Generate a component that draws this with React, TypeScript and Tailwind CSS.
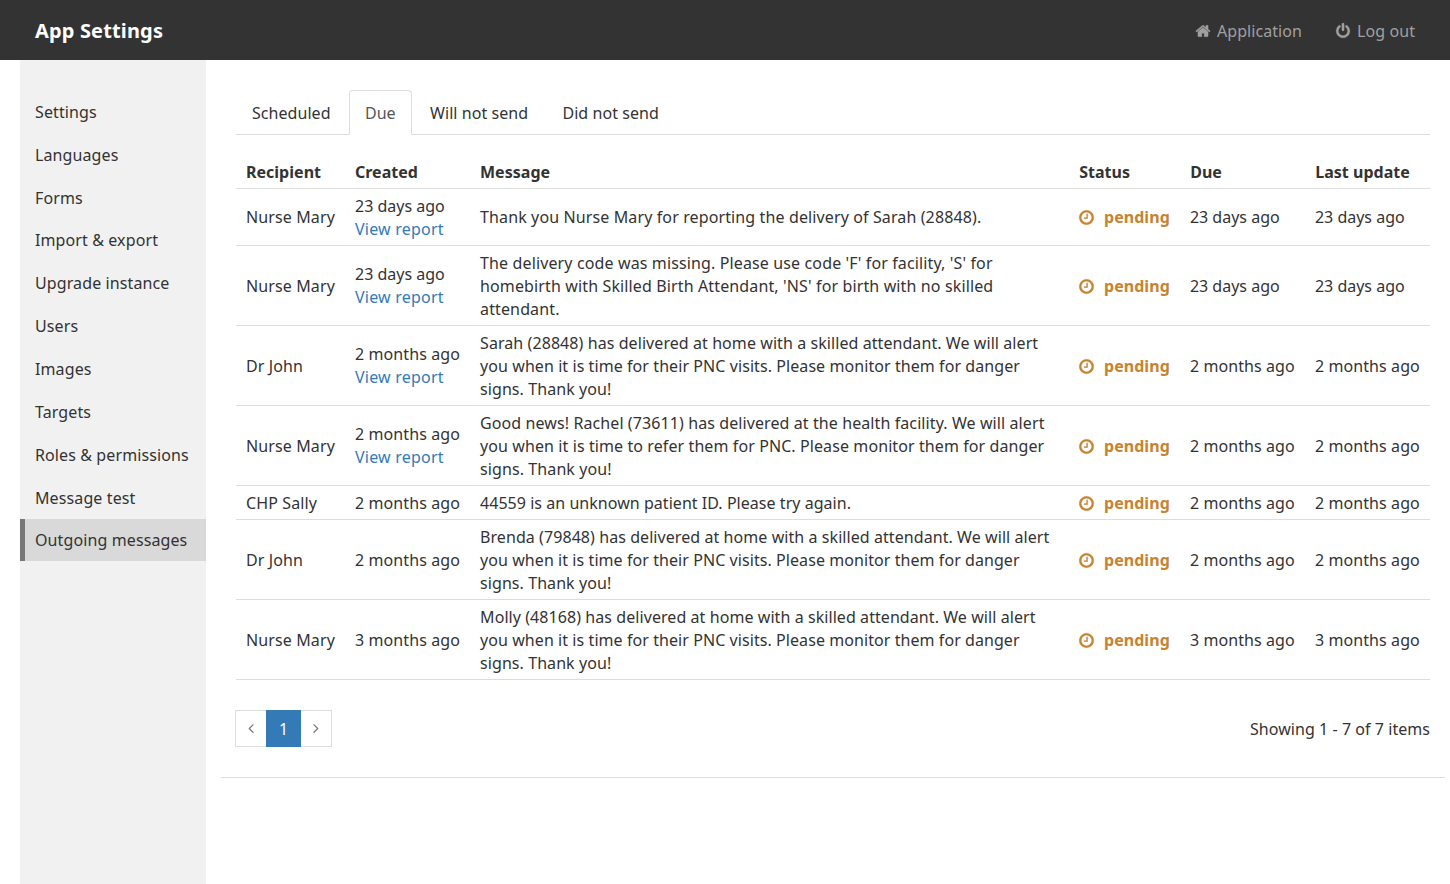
import React from 'react';

const HOME =
  'M1472 992v480q0 26-19 45t-45 19h-384v-384h-256v384h-384q-26 0-45-19t-19-45v-480q0-1 .5-3t.5-3l575-474 575 474q1 2 1 6zm223-69l-62 74q-8 9-21 11h-3q-13 0-21-7l-692-577-692 577q-12 8-24 7-13-2-21-11l-62-74q-8-10-7-23.5t11-21.5l719-599q32-26 76-26t76 26l244 204v-195q0-14 9-23t23-9h192q14 0 23 9t9 23v408l219 182q10 8 11 21.5t-7 23.5z';
const POWER =
  'M1664 896q0 156-61 298t-164 245-245 164-298 61-298-61-245-164-164-245-61-298q0-182 80.5-343t226.5-270q43-32 95.5-25t83.5 50q32 42 24.5 94.5t-49.5 84.5q-98 74-151.5 181t-53.5 228q0 104 40.5 198.5t109.5 163.5 163.5 109.5 198.5 40.5 198.5-40.5 163.5-109.5 109.5-163.5 40.5-198.5q0-121-53.5-228t-151.5-181q-42-32-49.5-84.5t24.5-94.5q31-43 84-50t95 25q146 109 226.5 270t80.5 343zm-640-768v640q0 52-38 90t-90 38-90-38-38-90v-640q0-52 38-90t90-38 90 38 38 90z';
const CLOCK =
  'M1024 544v448q0 14-9 23t-23 9h-320q-14 0-23-9t-9-23v-64q0-14 9-23t23-9h224v-352q0-14 9-23t23-9h64q14 0 23 9t9 23zm416 352q0-148-73-273t-198-198-273-73-273 73-198 198-73 273 73 273 198 198 273 73 273-73 198-198 73-273zm224 0q0 209-103 385.5t-279.5 279.5-385.5 103-385.5-103-279.5-279.5-103-385.5 103-385.5 279.5-279.5 385.5-103 385.5 103 279.5 279.5 103 385.5z';
const ANGLE_LEFT =
  'M1203 544q0 13-10 23l-393 393 393 393q10 10 10 23t-10 23l-50 50q-10 10-23 10t-23-10l-466-466q-10-10-10-23t10-23l466-466q10-10 23-10t23 10l50 50q10 10 10 23z';
const ANGLE_RIGHT =
  'M1171 960q0 13-10 23l-466 466q-10 10-23 10t-23-10l-50-50q-10-10-10-23t10-23l393-393-393-393q-10-10-10-23t10-23l50-50q10-10 23-10t23 10l466 466q10 10 10 23z';

function Icon({ d, className = 'size-4', stroke = 0 }: { d: string; className?: string; stroke?: number }) {
  return (
    <svg
      viewBox="0 0 1792 1792"
      fill="currentColor"
      stroke="currentColor"
      strokeWidth={stroke}
      className={`shrink-0 overflow-visible ${className}`}
      aria-hidden="true"
    >
      <path d={d} />
    </svg>
  );
}

const MENU = [
  'Settings',
  'Languages',
  'Forms',
  'Import & export',
  'Upgrade instance',
  'Users',
  'Images',
  'Targets',
  'Roles & permissions',
  'Message test',
  'Outgoing messages',
];

const TABS = ['Scheduled', 'Due', 'Will not send', 'Did not send'];

type Row = { to: string; when: string; report?: boolean; text: string; tracking: string };

const ROWS: Row[] = [
  {
    to: 'Nurse Mary',
    when: '23 days ago',
    report: true,
    text: 'Thank you Nurse Mary for reporting the delivery of Sarah (28848).',
    tracking: 'tracking-[0.12px]',
  },
  {
    to: 'Nurse Mary',
    when: '23 days ago',
    report: true,
    text: "The delivery code was missing. Please use code 'F' for facility, 'S' for homebirth with Skilled Birth Attendant, 'NS' for birth with no skilled attendant.",
    tracking: 'tracking-[0.13px]',
  },
  {
    to: 'Dr John',
    when: '2 months ago',
    report: true,
    text: 'Sarah (28848) has delivered at home with a skilled attendant. We will alert you when it is time for their PNC visits. Please monitor them for danger signs. Thank you!',
    tracking: 'tracking-[0.075px]',
  },
  {
    to: 'Nurse Mary',
    when: '2 months ago',
    report: true,
    text: 'Good news! Rachel (73611) has delivered at the health facility. We will alert you when it is time to refer them for PNC. Please monitor them for danger signs. Thank you!',
    tracking: 'tracking-[0.095px]',
  },
  {
    to: 'CHP Sally',
    when: '2 months ago',
    text: '44559 is an unknown patient ID. Please try again.',
    tracking: 'tracking-[0.04px]',
  },
  {
    to: 'Dr John',
    when: '2 months ago',
    text: 'Brenda (79848) has delivered at home with a skilled attendant. We will alert you when it is time for their PNC visits. Please monitor them for danger signs. Thank you!',
    tracking: 'tracking-[0.07px]',
  },
  {
    to: 'Nurse Mary',
    when: '3 months ago',
    text: 'Molly (48168) has delivered at home with a skilled attendant. We will alert you when it is time for their PNC visits. Please monitor them for danger signs. Thank you!',
    tracking: 'tracking-[0.07px]',
  },
];

const COLUMNS = [
  { label: 'Recipient', width: 'w-[109px]' },
  { label: 'Created', width: 'w-[125px]' },
  { label: 'Message', width: 'w-[599px]' },
  { label: 'Status', width: 'w-[111px]' },
  { label: 'Due', width: 'w-[125px]' },
  { label: 'Last update', width: 'w-[125px]' },
];

function When({ value }: { value: string }) {
  return <div className={value.includes('months') ? 'tracking-[0.09px]' : 'tracking-normal'}>{value}</div>;
}

export default function App() {
  return (
    <div className="flex h-[884px] w-[1450px] flex-col overflow-hidden bg-white font-['Noto_Sans',sans-serif] text-[16px] leading-[22.857px] text-[#333333]">
      <header className="flex h-[60px] shrink-0 items-center justify-between bg-[#333333] px-[35px]">
        <h1 className="pt-[2px] text-[20px] font-bold tracking-[0.15px] text-white">App Settings</h1>
        <nav className="flex gap-[33px] pt-[2px] text-[#a0a0a0]">
          <a className="flex items-center gap-[5.8px] tracking-[0.05px]">
            <Icon d={HOME} stroke={30} />
            Application
          </a>
          <a className="flex items-center gap-[6.2px] tracking-[0.07px]">
            <Icon d={POWER} className="size-4" stroke={30} />
            Log out
          </a>
        </nav>
      </header>
      <div className="flex min-h-0 flex-1 pl-5">
        <ul className="w-[185.6px] shrink-0 bg-[#f1f1f1] pt-[30px] tracking-[0.11px]">
          {MENU.map((item) => (
            <li
              key={item}
              className={
                item === 'Outgoing messages'
                  ? 'border-l-[5px] border-[#777777] bg-[#d9d9d9] pt-[10.892px] pb-[9.11px] pl-[10px]'
                  : 'pt-[10.892px] pb-[9.11px] pl-[15px]'
              }
            >
              {item}
            </li>
          ))}
        </ul>
        <main className="min-w-0 flex-1 pr-[5px] pl-[15px]">
          <section className="border-b border-[#dddddd] px-[15px] pt-[30px] pb-[30px]">
            <ul className="flex border-b border-[#dddddd] tracking-[0.05px]">
              {TABS.map((tab) => (
                <li
                  key={tab}
                  className={
                    tab === 'Due'
                      ? 'mr-[2px] -mb-px rounded-t-[4px] border border-[#dddddd] border-b-white bg-white pt-[11px] pr-[15px] pb-[9px] pl-[15.4px] text-[#555555]'
                      : 'mr-[2px] -mb-px border border-transparent pt-[11px] pr-[15px] pb-[9px] pl-[15.4px]'
                  }
                >
                  {tab}
                </li>
              ))}
            </ul>
            <table className="mt-[20px] w-full table-fixed border-collapse">
              <thead>
                <tr className="border-b border-[#dddddd]">
                  {COLUMNS.map((c) => (
                    <th
                      key={c.label}
                      className={`${c.width} pt-[6px] pr-[9px] pb-[4px] pl-[10.3px] text-left font-bold tracking-[0.03px]`}
                    >
                      {c.label}
                    </th>
                  ))}
                </tr>
              </thead>
              <tbody>
                {ROWS.map((r) => (
                  <tr key={r.text} className="border-b border-[#dddddd] leading-[23px] whitespace-nowrap">
                    <td className="pt-[6px] pr-[9px] pb-[4px] pl-[10.4px] tracking-[0.12px]">{r.to}</td>
                    <td className="pt-[6px] pr-[9px] pb-[4px] pl-[10.4px]">
                      <When value={r.when} />
                      {r.report && <a className="block tracking-[0.22px] text-[#337ab7]">View report</a>}
                    </td>
                    <td className={`pt-[6px] pr-[9px] pb-[4px] pl-[10.4px] whitespace-normal ${r.tracking}`}>
                      {r.text}
                    </td>
                    <td className="pt-[6px] pr-[9px] pb-[4px] pl-[10.4px]">
                      <span className="flex items-center gap-[9.3px] font-bold tracking-[0.06px] text-[#c78330]">
                        <Icon d={CLOCK} className="-ml-[1.6px] size-[17px]" stroke={24} />
                        pending
                      </span>
                    </td>
                    <td className="pt-[6px] pr-[9px] pb-[4px] pl-[10px]">
                      <When value={r.when} />
                    </td>
                    <td className="pt-[6px] pr-[9px] pb-[4px] pl-[10px]">
                      <When value={r.when} />
                    </td>
                  </tr>
                ))}
              </tbody>
            </table>
            <div className="mt-[30px] flex items-center justify-between">
              <ul className="-ml-px flex h-[37px] text-[#777777]">
                <li className="flex w-[31px] items-center justify-center border border-r-0 border-[#dddddd]">
                  <Icon d={ANGLE_LEFT} className="mb-px size-4" />
                </li>
                <li className="flex w-[35px] items-center justify-center bg-[#337ab7] pt-[2px] pl-px text-white">1</li>
                <li className="flex w-[31px] items-center justify-center border border-l-0 border-[#dddddd]">
                  <Icon d={ANGLE_RIGHT} className="mb-px size-4" />
                </li>
              </ul>
              <p className="pt-[2px] tracking-[0.05px]">Showing 1 - 7 of 7 items</p>
            </div>
          </section>
        </main>
      </div>
    </div>
  );
}
